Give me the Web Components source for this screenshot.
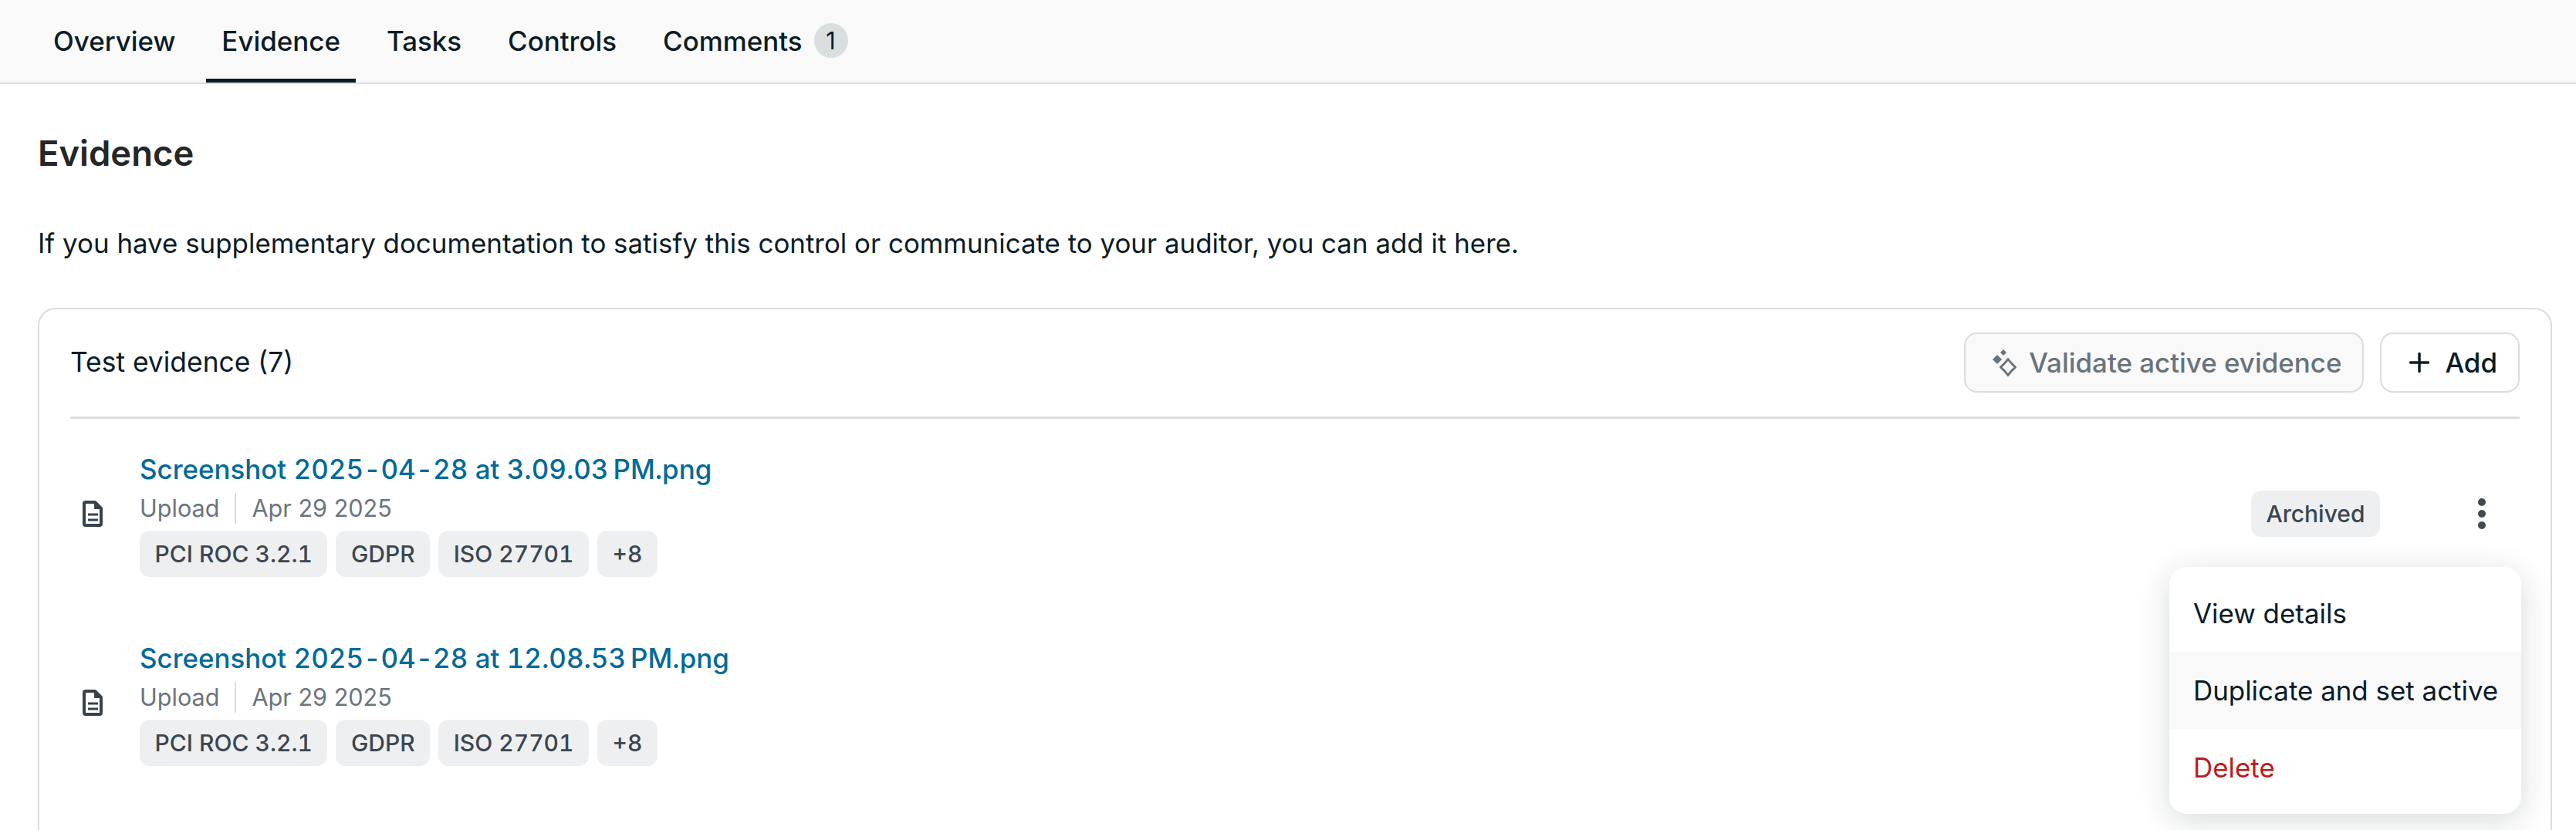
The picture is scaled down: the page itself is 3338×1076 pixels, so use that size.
<!DOCTYPE html>
<html lang="en">
<head>
<meta charset="utf-8">
<title>Evidence</title>
<style>
  html, body { margin: 0; height: 100%; overflow: hidden; background: #fff; }
  body { font-family: Inter, "Liberation Sans", sans-serif; font-size: 34.9px; line-height: 50px; color: #0b1c26; }
</style>
</head>
<body>
<control-tabs>
  <tab-item>Overview</tab-item>
  <tab-item active>Evidence</tab-item>
  <tab-item>Tasks</tab-item>
  <tab-item>Controls</tab-item>
  <tab-item count="1">Comments</tab-item>
</control-tabs>

<evidence-page>
  <evidence-card heading="Test evidence (7)">
    <evidence-row name="Screenshot 2025&#8209;04&#8209;28 at 3.09.03&#8239;PM.png" source="Upload" date="Apr 29 2025" status="Archived">
      <tag-chip>PCI ROC 3.2.1</tag-chip>
      <tag-chip>GDPR</tag-chip>
      <tag-chip>ISO 27701</tag-chip>
      <tag-chip>+8</tag-chip>
      <row-menu slot="menu">
        <menu-item>View details</menu-item>
        <menu-item hover>Duplicate and set active</menu-item>
        <menu-item danger>Delete</menu-item>
      </row-menu>
    </evidence-row>
    <evidence-row name="Screenshot 2025&#8209;04&#8209;28 at 12.08.53&#8239;PM.png" source="Upload" date="Apr 29 2025">
      <tag-chip>PCI ROC 3.2.1</tag-chip>
      <tag-chip>GDPR</tag-chip>
      <tag-chip>ISO 27701</tag-chip>
      <tag-chip>+8</tag-chip>
    </evidence-row>
  </evidence-card>
</evidence-page>

<script>
class ControlTabs extends HTMLElement {
  constructor() {
    super();
    this.attachShadow({ mode: 'open' });
    this.shadowRoot.innerHTML = `
      <style>
        :host {
          display: flex;
          gap: 20px;
          height: 107px;
          padding-left: 49px;
          background: #f9f9f9;
          border-bottom: 2px solid #d9dedf;
        }
      </style>
      <slot></slot>
    `;
  }
}

class TabItem extends HTMLElement {
  constructor() {
    super();
    this.attachShadow({ mode: 'open' });
    const count = this.getAttribute('count');
    this.shadowRoot.innerHTML = `
      <style>
        :host {
          display: flex;
          align-items: center;
          box-sizing: border-box;
          height: 107px;
          padding: 3px 20px 0;
          border-bottom: 5px solid transparent;
          font-weight: 500;
          white-space: nowrap;
        }
        :host([active]) { border-bottom-color: #0b1c26; }
        .count {
          display: flex;
          align-items: center;
          justify-content: center;
          width: 44px;
          height: 45px;
          margin-left: 15px;
          border-radius: 50%;
          background: #d9dedf;
          font-size: 30.6px;
          font-weight: 400;
        }
      </style>
      <slot></slot>
      ${count ? `<span class="count">${count}</span>` : ''}
    `;
  }
}

class EvidencePage extends HTMLElement {
  constructor() {
    super();
    this.attachShadow({ mode: 'open' });
    this.shadowRoot.innerHTML = `
      <style>
        :host { display: block; padding: 60px 31px 0 49px; }
        h2 {
          margin: 0 0 61px;
          font-size: 45.4px;
          line-height: 60px;
          font-weight: 600;
          color: #262626;
        }
        p { margin: 0 0 59px; }
      </style>
      <h2>Evidence</h2>
      <p>If you have supplementary documentation to satisfy this control or communicate to your auditor, you can add it here.</p>
      <slot></slot>
    `;
  }
}

class EvidenceCard extends HTMLElement {
  constructor() {
    super();
    this.attachShadow({ mode: 'open' });
    this.shadowRoot.innerHTML = `
      <style>
        :host {
          display: block;
          min-height: 900px;
          padding: 30px 40px 0;
          border: 2px solid #d9dedf;
          border-radius: 23px;
          background: #fff;
        }
        header {
          display: flex;
          align-items: center;
          justify-content: space-between;
          padding-bottom: 31px;
          border-bottom: 3px solid #d9dedf;
        }
        .title { font-size: 35.4px; }
        .actions { display: flex; gap: 21px; }
        button {
          display: flex;
          align-items: center;
          gap: 14px;
          box-sizing: border-box;
          height: 78px;
          border: 2px solid #d9dedf;
          border-radius: 17px;
          background: #fff;
          color: inherit;
          font: 500 34.9px/50px Inter, "Liberation Sans", sans-serif;
        }
        button svg { display: block; flex: none; }
        .validate { padding: 0 27px 0 30px; background: #f9f9f9; color: #68737a; }
        .add { padding: 0 27px 0 30px; }
      </style>
      <header>
        <span class="title">${this.getAttribute('heading')}</span>
        <div class="actions">
          <button class="validate" disabled>
            <svg width="38" height="38" viewBox="0 0 38 38" fill="currentColor">
              <path d="M19 2l4 4-4 4-4-4z"/>
              <path d="M11 9l6 6-6 6-6-6z"/>
              <path d="M25 14.5c2.4 3.6 5 6.2 9.5 10.500-4.500 4.300-7.100 6.900-9.500 10.500-2.400-3.600-5-6.200-9.500-10.500 4.500-4.300 7.100-6.900 9.500-10.500z" fill="none" stroke="currentColor" stroke-width="3" stroke-linejoin="round"/>
            </svg>
            Validate active evidence
          </button>
          <button class="add">
            <svg width="38" height="38" viewBox="0 0 38 38" fill="none" stroke="currentColor" stroke-width="3.500" stroke-linecap="round">
              <path d="M19 7.500v23M7.500 19h23"/>
            </svg>
            Add
          </button>
        </div>
      </header>
      <slot></slot>
    `;
  }
}

class EvidenceRow extends HTMLElement {
  constructor() {
    super();
    this.attachShadow({ mode: 'open' });
    const status = this.getAttribute('status');
    // the non-breaking hyphens sit wider apart in the original file names
    const name = this.getAttribute('name').replace(/\u2011/g, '<span class="hy">\u2011</span>');
    this.shadowRoot.innerHTML = `
      <style>
        :host {
          display: grid;
          grid-template-columns: 58px 1fr auto 98px;
          align-items: center;
          position: relative;
          padding: 40px 0;
        }
        .icon { display: block; justify-self: center; }
        .body { margin-left: 32px; }
        .name { color: #006b99; font-weight: 500; font-variant-numeric: tabular-nums; }
        .hy { margin: 0 4.4px; }
        .meta {
          display: flex;
          align-items: center;
          margin-top: 4px;
          font-size: 30.6px;
          line-height: 44px;
          color: #6b757b;
        }
        .meta i { width: 2px; height: 40px; margin: 0 20px; background: #d9dedf; }
        .tags { display: flex; gap: 11px; margin-top: 7px; }
        .status { margin-right: 83px; }
        .more { display: block; justify-self: center; }
      </style>
      <svg class="icon" width="28" height="36" viewBox="0 0 28 36" fill="none" stroke="#36424c" stroke-width="4">
        <path d="M5 3h12l8 8v20a2 2 0 0 1-2 2H5a2 2 0 0 1-2-2V5a2 2 0 0 1 2-2z" stroke-linejoin="round"/>
        <path d="M17 3l8 8h-8z" fill="#36424c" stroke-width="2" stroke-linejoin="round"/>
        <path d="M8 19h13M8 26h13" stroke-width="3"/>
      </svg>
      <div class="body">
        <div class="name">${name}</div>
        <div class="meta"><span>${this.getAttribute('source')}</span><i></i><span>${this.getAttribute('date')}</span></div>
        <div class="tags"><slot></slot></div>
      </div>
      ${status ? `<tag-chip class="status">${status}</tag-chip>` : '<span></span>'}
      ${status ? `<svg class="more" width="14" height="44" viewBox="0 0 14 44" fill="#3f4a52">
        <circle cx="7" cy="7" r="5"/><circle cx="7" cy="22" r="5"/><circle cx="7" cy="37" r="5"/>
      </svg>` : '<span></span>'}
      <slot name="menu"></slot>
    `;
  }
}

class TagChip extends HTMLElement {
  constructor() {
    super();
    this.attachShadow({ mode: 'open' });
    this.shadowRoot.innerHTML = `
      <style>
        :host {
          display: inline-flex;
          align-items: center;
          box-sizing: border-box;
          height: 60px;
          padding: 0 19.5px;
          border-radius: 13px;
          background: #eeeff1;
          color: #3b4650;
          font-size: 30px;
          font-weight: 500;
          font-variant-numeric: tabular-nums;
          white-space: nowrap;
        }
      </style>
      <slot></slot>
    `;
  }
}

class RowMenu extends HTMLElement {
  constructor() {
    super();
    this.attachShadow({ mode: 'open' });
    this.shadowRoot.innerHTML = `
      <style>
        :host {
          position: absolute;
          top: 192px;
          right: -2px;
          display: block;
          box-sizing: border-box;
          width: 456px;
          padding: 10px 0;
          border-radius: 22px;
          background: #fff;
          box-shadow: 0 8px 40px rgba(11, 28, 38, 0.16);
          overflow: hidden;
        }
      </style>
      <slot></slot>
    `;
  }
}

class MenuItem extends HTMLElement {
  constructor() {
    super();
    this.attachShadow({ mode: 'open' });
    this.shadowRoot.innerHTML = `
      <style>
        :host {
          display: flex;
          align-items: center;
          height: 100px;
          padding: 0 31px;
          white-space: nowrap;
        }
        :host([hover]) { background: #f9f9f9; }
        :host([danger]) { color: #bf1a1a; }
      </style>
      <slot></slot>
    `;
  }
}

customElements.define('control-tabs', ControlTabs);
customElements.define('tab-item', TabItem);
customElements.define('evidence-page', EvidencePage);
customElements.define('evidence-card', EvidenceCard);
customElements.define('evidence-row', EvidenceRow);
customElements.define('tag-chip', TagChip);
customElements.define('row-menu', RowMenu);
customElements.define('menu-item', MenuItem);
</script>
</body>
</html>
